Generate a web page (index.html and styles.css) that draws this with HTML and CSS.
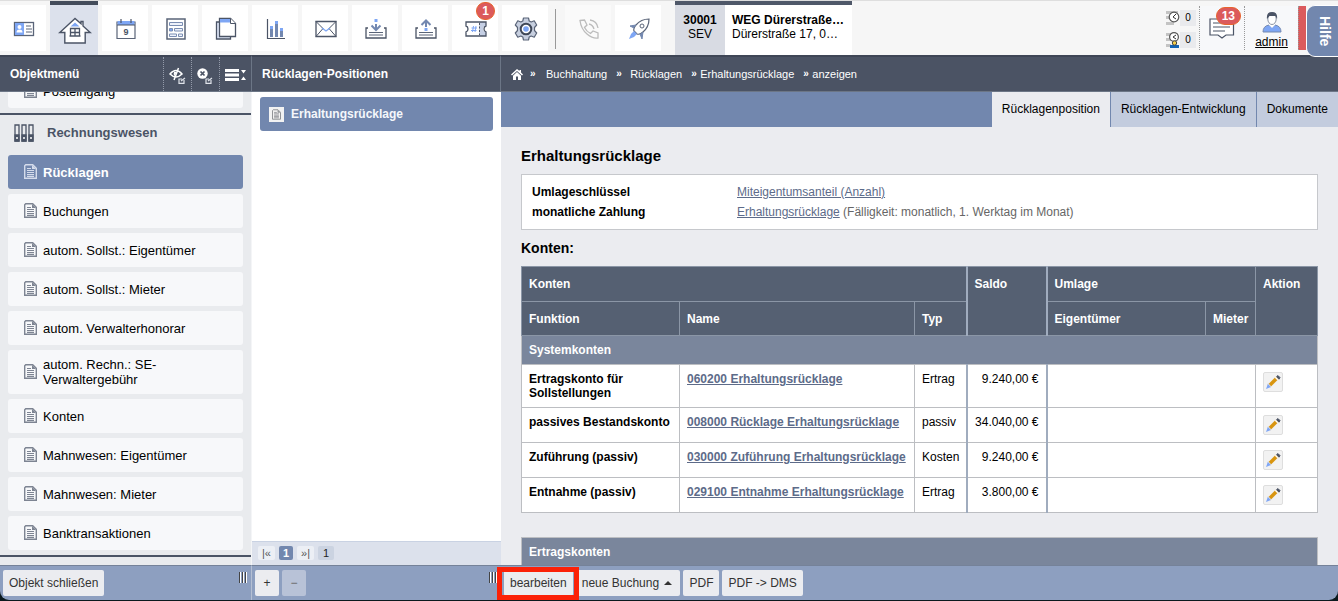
FILE: index.html
```html
<!DOCTYPE html>
<html lang="de">
<head>
<meta charset="utf-8">
<title>Rücklagen – Erhaltungsrücklage</title>
<link rel="stylesheet" href="styles.css">
</head>
<body>
<svg class="defs" aria-hidden="true">
  <symbol id="doc" viewBox="0 0 13 15">
    <path d="M1.700.700h7l3.600 3.600v10H.700V1.700z" fill="none" stroke="currentColor" stroke-width="1.400"/>
    <path d="M8 1v4h4z" fill="currentColor"/>
    <path d="M3 4.500h4M3 6.500h7M3 8.500h7M3 10.500h7M3 12.300h7" stroke="currentColor" stroke-width="1.200"/>
  </symbol>
  <symbol id="pencil" viewBox="0 0 16 16">
    <path d="M4 12 12 4" stroke="#d9950f" stroke-width="3.600"/>
    <path d="m10.300 3.300 2.500 2.500" stroke="#fff" stroke-width="1.300"/>
    <path d="m11.600 2.600 1.400-1 2 2-1 1.600z" fill="#4b5466" stroke="#4b5466"/>
    <path d="m3 9.500-2 5.500 5-2z" fill="#7fa6f5"/>
    <path d="m3 9.600 3.400 3.400" stroke="#dfe9ff"/>
  </symbol>
</svg>
<div class="app">
  <header class="topbar">
    <nav class="tools" aria-label="Hauptnavigation">
      <a class="tool" href="#" aria-label="Kontakte"><svg width="22" height="16" viewBox="0 0 22 16" fill="none"><rect x="1.500" y="1.500" width="19" height="13" fill="#fff" stroke="#5a6478" stroke-width="1.300"/><path d="M2 2h9v12H2z" fill="#7ea6f4"/><circle cx="6.500" cy="6" r="2" fill="#fff"/><path d="M3.500 11.500q0-3 3-3t3 3z" fill="#fff"/><path d="M13 5h5M13 8h6M13 11h6" stroke="#5a6478"/></svg></a>
      <a class="tool tool-active" href="#" aria-label="Objekte"><svg width="34" height="28" viewBox="0 0 34 28" fill="none"><path d="M17 1.500 1.800 15.500h5V26h20.400V15.500h5L25 9V4.500h-2v2.300z" fill="#fff" stroke="#4b5466" stroke-width="1.400"/><path d="m12.500 9.500 4.500-4 4.500 4z" fill="#7ea6f4"/><path d="M12.500 11.500h9v7.500h-9zM17 11.500v7.500M12.500 15.500h9M11.500 19h11" stroke="#4b5466" stroke-width="1.300"/></svg></a>
      <a class="tool" href="#" aria-label="Kalender"><svg width="20" height="22" viewBox="0 0 20 22"><path d="M1 4h18v16.500H1z" fill="#fff" stroke="#5a6478" stroke-width="1.200"/><path d="M1.600 3h16.800v4H1.600z" fill="#7ea6f4"/><path d="M1 7h18M5 1v4M15 1v4" stroke="#4b5466" stroke-width="1.200"/><text class="date-digit" x="10" y="16.500" text-anchor="middle">9</text></svg></a>
      <a class="tool" href="#" aria-label="Berichte"><svg width="20" height="22" viewBox="0 0 20 22" fill="none" stroke="#7b8eb3"><path d="M1 1h18v20H1z" fill="#fff" stroke="#5a6478" stroke-width="1.500"/><path d="M3.500 4.500h13v3h-13zM8.500 10.500h8v2.500h-8zM3.500 16h7v2.500h-7zM12.500 16h4v2.500h-4z" fill="#eef2fb"/><path d="M3.500 10.500h3V13h-3z" fill="#7ea6f4"/></svg></a>
      <a class="tool" href="#" aria-label="Dokumente"><svg width="22" height="24" viewBox="0 0 22 24"><path d="M1.500 5h14v17h-14z" fill="#dfe7f8" stroke="#4b5466" stroke-width="1.300"/><path d="M4.500 1.500h11l5 5v13h-16z" fill="#fff" stroke="#4b5466" stroke-width="1.300"/><path d="M5 2h10v3.500H5z" fill="#7ea6f4"/><path d="M15.500 1.500v5h5" fill="#fff" stroke="#4b5466"/></svg></a>
      <a class="tool" href="#" aria-label="Auswertungen"><svg width="20" height="22" viewBox="0 0 20 22"><path d="M1.500 1v19.500H19" fill="none" stroke="#4b5466" stroke-width="1.200"/><path d="M4 11h3v8H4zM9 6h3v13H9zM14 13h3v6h-3z" fill="#7388b0"/><path d="M4 8h3v3H4zM9 3h3v3H9zM14 10h3v3h-3z" fill="#7ea6f4"/></svg></a>
      <a class="tool" href="#" aria-label="E-Mail"><svg width="22" height="18" viewBox="0 0 22 18" fill="none"><path d="M1 1.500h20v15H1z" stroke="#4b5466" stroke-width="1.300"/><path d="m1 1.500 7 7L1 16.500M21 1.500l-7 7 7 8" stroke="#4b5466"/><path d="m7 8 4 3 4-3" stroke="#7ea6f4" stroke-width="1.300"/></svg></a>
      <a class="tool" href="#" aria-label="Eingang"><svg width="22" height="20" viewBox="0 0 22 20" fill="none"><path d="M3 9H1v10h20V9h-2" stroke="#4b5466" stroke-width="1.300"/><path d="M4 13.500h14M4 16h14" stroke="#5a6478"/><path d="M11 5v6M6.500 6.500 11 11l4.500-4.500" stroke="#7388b0" stroke-width="2"/><path d="M9.500 0h3v3h-3z" fill="#7ea6f4"/></svg></a>
      <a class="tool" href="#" aria-label="Ausgang"><svg width="22" height="20" viewBox="0 0 22 20" fill="none"><path d="M3 9H1v10h20V9h-2" stroke="#4b5466" stroke-width="1.300"/><path d="M4 13.500h14M4 16h14" stroke="#5a6478"/><path d="M11 2v6M6.500 6 11 1.500 15.500 6" stroke="#7388b0" stroke-width="2"/><path d="M9.500 9h3v3h-3z" fill="#7ea6f4"/></svg></a>
      <a class="tool" href="#" aria-label="Tickets"><svg width="22" height="16" viewBox="0 0 22 16" fill="none"><path d="M14 1h7v4q-3 0-3 3t3 3v4h-7z" fill="#c5cfe4"/><path d="M1 1h20v4q-2 .5-2 3t2 3v4H1v-4q2-.5 2-3T1 5z" stroke="#4b5466" stroke-width="1.300"/><path d="M14.500 2v12" stroke="#4b5466" stroke-dasharray="2 1.500"/><path d="m8.500 5-1 6m3.500-6-1 6M6.500 7h5.500m-6 2.500h5.500" stroke="#7ea6f4"/></svg><span class="badge">1</span></a>
      <a class="tool" href="#" aria-label="Einstellungen"><svg width="24" height="24" viewBox="0 0 24 24"><path d="M9.500 1h5l.7 3 2 1 3-1.200 2.500 4.200L20.500 10.500v3l2.200 2.500-2.500 4.200-3-1.200-2 1-.7 3h-5l-.7-3-2-1-3 1.200L1.300 16l2.200-2.500v-3L1.300 8l2.500-4.200 3 1.200 2-1z" fill="#c7cfdf" stroke="#5a6478" stroke-width="1.200" stroke-linejoin="round"/><circle cx="12" cy="12" r="5.300" fill="#fff" stroke="#3f4757" stroke-width="2"/><circle cx="12" cy="12" r="2.800" fill="#7ea6f4"/></svg></a>
      <span class="tool-rule"></span>
      <a class="tool tool-off" href="#" aria-label="Telefon"><svg width="20" height="20" viewBox="0 0 20 20" fill="none" stroke="#bcbcbc" stroke-width="1.300"><path d="M1 1.500 5.500 1 8 6 5.500 8.500q2 4 6 6L14 12l5 2v5q-5 1-11-4T1 1.500z"/><path d="M10 5q4 1 5 5M11 1q7 1 8 8"/></svg></a>
      <a class="tool" href="#" aria-label="Schnellstart"><svg width="22" height="22" viewBox="0 0 22 22" fill="none" stroke="#5a6478"><path d="M21 1q-8 0-13 6-3 4-2 6l3 3q3 1 6-2 6-5 6-13z" stroke-width="1.200"/><circle cx="14" cy="8" r="2"/><path d="m8 7-6 1 4 2M15 14l-1 7-2-5" fill="#7388b0" stroke="#7388b0"/><path d="m6 13-3 3-2 5 5-2 3-3z" fill="#7ea6f4" stroke="none"/></svg></a>
    </nav>
    <a class="object" href="#">
      <span class="object-no"><b>30001</b><span>SEV</span></span>
      <span class="object-name"><b>WEG Dürerstraße…</b><span>Dürerstraße 17, 0…</span></span>
    </a>
    <div class="status">
      <div class="counters">
        <span class="counter"><svg width="14" height="16" viewBox="0 0 14 16"><path d="M0 1h12v3H0zM0 6h10v3H0zM0 12h8v3H0z" fill="#c3c3c3"/><circle cx="8" cy="7" r="4.800" fill="#fff" stroke="#555" stroke-width="1.200"/><path d="M10 4 7 7l3 2" fill="none" stroke="#333"/></svg><span class="count">0</span></span>
        <span class="counter"><svg width="14" height="16" viewBox="0 0 14 16"><path d="M0 1h12v3H0zM0 6h10v3H0zM0 12h5v3H0z" fill="#c3c3c3"/><circle cx="8" cy="5" r="4.400" fill="#fff" stroke="#555" stroke-width="1.200"/><path d="M10 3 7 5l3 2" fill="none" stroke="#333"/><path d="M4 16v-3h9v3z" fill="#1464b4"/><circle cx="8.500" cy="11" r="2.200" fill="#f4cf4a" stroke="#444"/></svg><span class="count">0</span></span>
      </div>
      <a class="messages" href="#" aria-label="Nachrichten"><svg width="26" height="22" viewBox="0 0 26 22" fill="none" stroke="#4b5466" stroke-width="1.200"><path d="M1 2h23.500v16H17l-4 3-4-3H1z" fill="#fff"/><path d="M4 6h13M4 10h17M4 14h12"/></svg><span class="badge badge-wide">13</span></a>
      <a class="user" href="#"><svg width="20" height="22" viewBox="0 0 20 22"><path d="M1 21q0-6 6-7l3 2 3-2q6 1 6 7z" fill="#7ea6f4" stroke="#7388b0"/><path d="M7 12h6v2l-3 3-3-3z" fill="#fff"/><ellipse cx="10" cy="8" rx="4.200" ry="5.500" fill="#fff" stroke="#8a93a3"/><path d="M5 8q-1-7 5-7t5 7l-1.500-3h-6z" fill="#4b5466"/></svg><span>admin</span></a>
      <span class="alarm"></span>
    </div>
    <button class="help" type="button">Hilfe</button>
  </header>

  <div class="columns">
    <aside class="col col-menu">
      <div class="bar">
        <h2 class="bar-title">Objektmenü</h2>
        <button class="bar-btn" type="button" aria-label="Ausblenden"><svg width="18" height="18" viewBox="0 0 18 18" fill="none" stroke="#fff" stroke-width="1.500"><path d="M1 7q6-7 12 0-6 6-12 0zM9.500 1 5 13"/><path d="M5 5q-1 3 1 4l1.500-4z" fill="#fff" stroke="none"/><path d="M15 13v3.300h-5V12h3M12 14l4-3" stroke="#dfe3ea" stroke-width="1.200"/></svg></button>
        <button class="bar-btn" type="button" aria-label="Schließen"><svg width="18" height="18" viewBox="0 0 18 18" fill="none"><circle cx="5.500" cy="6.500" r="5.200" fill="#fff"/><path d="m3.500 4.500 4 4m0-4-4 4" stroke="#4b5364" stroke-width="1.700"/><path d="M14 13v3.300H9V12h3M11 14l4-3" stroke="#dfe3ea" stroke-width="1.200"/></svg></button>
        <button class="bar-btn bar-btn-last" type="button" aria-label="Ansicht"><svg width="21" height="12" viewBox="0 0 21 12" fill="#fff"><path d="M0 0h14v3H0zM0 4.500h14v3H0zM0 9h14v3H0zM16 1h5l-2.500 3.500zM16 11h5l-2.500-3.500z"/></svg></button>
      </div>
      <nav class="menu" aria-label="Objektmenü">
        <div class="menu-scroll">
          <a class="item" href="#"><svg class="doc"><use href="#doc"/></svg><span>Posteingang</span></a>
          <h3 class="group"><svg width="20" height="18" viewBox="0 0 20 18" fill="none" stroke="#4b5466" stroke-width="1.300"><path d="M1 1h4v16H1zM8 1h4v16H8zM15 1h4v16h-4z"/><path d="M1 11h4v6H1zM8 11h4v6H8zM15 11h4v6h-4z" fill="#4b5466"/><path d="M2 14h2M9 14h2M16 14h2" stroke="#fff"/></svg>Rechnungswesen</h3>
          <a class="item item-active" href="#"><svg class="doc"><use href="#doc"/></svg><span>Rücklagen</span></a>
          <a class="item" href="#"><svg class="doc"><use href="#doc"/></svg><span>Buchungen</span></a>
          <a class="item" href="#"><svg class="doc"><use href="#doc"/></svg><span>autom. Sollst.: Eigentümer</span></a>
          <a class="item" href="#"><svg class="doc"><use href="#doc"/></svg><span>autom. Sollst.: Mieter</span></a>
          <a class="item" href="#"><svg class="doc"><use href="#doc"/></svg><span>autom. Verwalterhonorar</span></a>
          <a class="item" href="#"><svg class="doc"><use href="#doc"/></svg><span>autom. Rechn.: SE-<br>Verwaltergebühr</span></a>
          <a class="item" href="#"><svg class="doc"><use href="#doc"/></svg><span>Konten</span></a>
          <a class="item" href="#"><svg class="doc"><use href="#doc"/></svg><span>Mahnwesen: Eigentümer</span></a>
          <a class="item" href="#"><svg class="doc"><use href="#doc"/></svg><span>Mahnwesen: Mieter</span></a>
          <a class="item" href="#"><svg class="doc"><use href="#doc"/></svg><span>Banktransaktionen</span></a>
          <div class="group"></div>
        </div>
      </nav>
      <footer class="foot">
        <button class="btn" type="button">Objekt schließen</button>
        <span class="grip"></span>
      </footer>
    </aside>

    <section class="col col-list">
      <div class="bar"><h2 class="bar-title">Rücklagen-Positionen</h2></div>
      <div class="list">
        <a class="position" href="#"><span class="position-icon"><svg class="doc-small"><use href="#doc"/></svg></span>Erhaltungsrücklage</a>
      </div>
      <div class="pager">
        <button class="page" type="button">|«</button>
        <button class="page page-active" type="button">1</button>
        <button class="page" type="button">»|</button>
        <span class="page page-total">1</span>
      </div>
      <footer class="foot">
        <button class="btn btn-square" type="button">+</button>
        <button class="btn btn-square" type="button" disabled>−</button>
        <span class="grip"></span>
      </footer>
    </section>

    <main class="col col-main">
      <nav class="bar crumbs" aria-label="Brotkrumen">
        <a class="crumb-home" href="#" aria-label="Start"><svg width="12" height="11" viewBox="0 0 12 11" fill="#fff"><path d="M6 0 0 5.500 1 6.500l5-4.500 5 4.500 1-1-2-2V1H8.500v1z"/><path d="M6 3 2 6.700V11h3V7.500h2V11h3V6.700z"/></svg></a>
        <span class="sep sep-first">»</span><a href="#">Buchhaltung</a>
        <span class="sep">»</span><a href="#">Rücklagen</a>
        <span class="sep sep-tight">»</span><a href="#">Erhaltungsrücklage</a>
        <span class="sep sep-tight">»</span><a href="#">anzeigen</a>
      </nav>
      <nav class="tabs" aria-label="Ansichten">
        <a class="tab tab-active" href="#">Rücklagenposition</a>
        <a class="tab" href="#">Rücklagen-Entwicklung</a>
        <a class="tab" href="#">Dokumente</a>
      </nav>
      <div class="page-body">
        <h1 class="title">Erhaltungsrücklage</h1>
        <dl class="facts">
          <dt>Umlageschlüssel</dt><dd><a href="#">Miteigentumsanteil (Anzahl)</a></dd>
          <dt>monatliche Zahlung</dt><dd><a href="#">Erhaltungsrücklage</a> (Fälligkeit: monatlich, 1. Werktag im Monat)</dd>
        </dl>
        <h2 class="subtitle">Konten:</h2>
        <table class="accounts">
          <colgroup><col class="c-func"><col class="c-name"><col class="c-type"><col class="c-saldo"><col><col class="c-tenant"><col class="c-action"></colgroup>
          <thead>
            <tr><th colspan="3">Konten</th><th class="edge" rowspan="2">Saldo</th><th class="edge" colspan="2">Umlage</th><th rowspan="2">Aktion</th></tr>
            <tr><th>Funktion</th><th>Name</th><th>Typ</th><th class="edge">Eigentümer</th><th>Mieter</th></tr>
          </thead>
          <tbody>
            <tr><th class="band" colspan="7">Systemkonten</th></tr>
            <tr><th>Ertragskonto für Sollstellungen</th><td><a href="#">060200 Erhaltungsrücklage</a></td><td>Ertrag</td><td class="edge amount">9.240,00 €</td><td class="edge" colspan="2"></td><td><button class="edit" type="button" aria-label="Bearbeiten"><svg width="16" height="16"><use href="#pencil"/></svg></button></td></tr>
            <tr><th>passives Bestandskonto</th><td><a href="#">008000 Rücklage Erhaltungsrücklage</a></td><td>passiv</td><td class="edge amount">34.040,00 €</td><td class="edge" colspan="2"></td><td><button class="edit" type="button" aria-label="Bearbeiten"><svg width="16" height="16"><use href="#pencil"/></svg></button></td></tr>
            <tr><th>Zuführung (passiv)</th><td><a href="#">030000 Zuführung Erhaltungsrücklage</a></td><td>Kosten</td><td class="edge amount">9.240,00 €</td><td class="edge" colspan="2"></td><td><button class="edit" type="button" aria-label="Bearbeiten"><svg width="16" height="16"><use href="#pencil"/></svg></button></td></tr>
            <tr><th>Entnahme (passiv)</th><td><a href="#">029100 Entnahme Erhaltungsrücklage</a></td><td>Ertrag</td><td class="edge amount">3.800,00 €</td><td class="edge" colspan="2"></td><td><button class="edit" type="button" aria-label="Bearbeiten"><svg width="16" height="16"><use href="#pencil"/></svg></button></td></tr>
          </tbody>
        </table>
        <table class="accounts">
          <tbody><tr><th class="band">Ertragskonten</th></tr></tbody>
        </table>
      </div>
      <footer class="foot">
        <span class="marked"><button class="btn" type="button">bearbeiten</button></span>
        <button class="btn" type="button">neue Buchung <span class="caret"></span></button>
        <button class="btn" type="button">PDF</button>
        <button class="btn" type="button">PDF -&gt; DMS</button>
      </footer>
    </main>
  </div>
</div>
</body>
</html>
```
FILE: styles.css
```css
* { box-sizing: border-box; }

body {
  margin: 0;
  height: 100vh;
  padding-bottom: 1px;
  overflow: hidden;
  background: #0b1a1e;
  color: #000;
  font: 12px/14px "Liberation Sans", Arial, sans-serif;
}

a { color: inherit; text-decoration: none; }
button { font: inherit; color: inherit; border: 0; padding: 0; margin: 0; background: none; }
h1, h2, h3, dl, dd { margin: 0; }
.defs { display: none; }

.app {
  display: flex;
  flex-direction: column;
  height: 100%;
  overflow: hidden;
  border-radius: 0 0 9px 9px;
}

/* Top bar */
.topbar {
  position: relative;
  display: flex;
  flex: none;
  height: 55px;
  border-top: 1px solid #dedede;
  background: #f6f6f6;
}
.tools { display: flex; gap: 4px; padding-top: 4px; }
.tool {
  position: relative;
  display: flex;
  align-items: center;
  justify-content: center;
  width: 46px;
  height: 46px;
  padding: 1px 0 0 1px;
  background: #fff;
}
.tool-active {
  width: 48px;
  height: 54px;
  margin-top: -4px;
  border-top: 4px solid #434c5b;
  background: #dce1ec;
}
.tool-off { background: #fafafa; }
.tool-rule { width: 1px; height: 40px; margin: 4px 5px 0 3px; background: #999; }
.date-digit { font: bold 9px "Liberation Sans", Arial, sans-serif; fill: #4b5466; }

.badge {
  position: absolute;
  top: -3px;
  right: 3px;
  min-width: 19px;
  padding: 1px 5px;
  border: 1px solid #e8632c;
  border-radius: 10px;
  background: #db5a5c;
  color: #fff;
  font-weight: bold;
  text-align: center;
}
.badge-wide { top: 1px; }

.object {
  display: flex;
  margin-left: 14px;
  border-top: 4px solid #4f5869;
  background: #fff;
  line-height: 14px;
}
.object-no, .object-name { display: flex; flex-direction: column; padding-top: 8px; }
.object-no { width: 50px; align-items: center; background: #d8dbe3; }
.object-name { width: 127px; padding-left: 7px; }

.status { display: flex; margin-left: auto; padding: 5px 32px 5px 0; }
.counters { display: flex; flex-direction: column; gap: 6px; padding: 4px 3px 0 0; font-size: 10px; }
.counter { display: flex; align-items: center; height: 16px; }
.count { width: 16px; padding: 1px 0; background: #e9eaed; text-align: center; }
.messages {
  position: relative;
  width: 46px;
  padding: 11px 0 0 9px;
  border-left: 1px dotted #999;
  border-right: 1px dotted #999;
  background: #f7f8fa;
}
.user {
  display: flex;
  flex-direction: column;
  align-items: center;
  gap: 2px;
  width: 53px;
  padding-top: 5px;
  background: #f7f8fa;
  text-decoration: underline;
}
.alarm { width: 8px; border-left: 1px dotted #999; background: #db5a5c; }
.help {
  position: absolute;
  z-index: 2;
  top: 4px;
  right: 0;
  width: 32px;
  height: 52px;
  padding-left: 5px;
  border: 1px solid #fff;
  border-right: 0;
  border-radius: 9px 0 0 9px;
  background: #7287ae;
  color: #fff;
  font-size: 14px;
  font-weight: bold;
  writing-mode: vertical-rl;
}

/* Columns */
.columns { display: flex; flex: 1; min-height: 0; }
.col { display: flex; flex-direction: column; min-width: 0; }
.col-menu { width: 252px; flex: none; }
.col-list { width: 249px; flex: none; }
.col-main { flex: 1; }

.bar {
  display: flex;
  align-items: center;
  flex: none;
  height: 37px;
  padding-left: 10px;
  border-top: 2px solid #3f4656;
  border-bottom: 1px solid #6c7686;
  border-right: 1px solid #6c7686;
  background: #4b5364;
  color: #fff;
}
.bar-title { flex: 1; font-size: 12px; }
.bar-btn {
  display: flex;
  align-items: center;
  align-self: stretch;
  justify-content: center;
  width: 28px;
  padding-top: 3px;
  border-left: 1px dotted #949baa;
}
.bar-btn-last { width: 32px; padding-top: 2px; }
.crumbs { border-right: 0; font-size: 11px; }
.crumb-home { display: flex; }
.sep { width: 23px; padding-left: 9px; font-weight: bold; font-size: 10px; }
.sep-first { padding-left: 7px; }
.sep-tight { width: 18px; }

.foot {
  display: flex;
  gap: 3px;
  flex: none;
  height: 35px;
  padding: 4px 3px;
  border-top: 1px solid #758299;
  background: #8d9fc0;
}
.col-menu .foot { border-right: 1px solid #b4bfd3; }
.btn {
  height: 26px;
  padding: 0 6px;
  border-radius: 2px;
  background: #ebecf0;
  color: #333;
  white-space: nowrap;
}
.btn-square { width: 24px; }
.btn:disabled { background: #b8c2d7; color: #666; }
.grip {
  width: 8px;
  height: 11px;
  margin: 2px 1px 0 auto;
  background: repeating-linear-gradient(90deg, #444 0 1px, #fff 1px 2px, #8d9fc0 2px 3px);
}
.caret {
  display: inline-block;
  margin: 0 2px 2px 2px;
  border: 4px solid transparent;
  border-top: 0;
  border-bottom-color: #333;
}
.marked { position: relative; display: flex; }
.marked::after {
  content: "";
  position: absolute;
  inset: -3px -6px -4px -7px;
  border: 5px solid #fb2108;
}

/* Object menu */
.menu {
  flex: 1;
  min-height: 0;
  overflow: hidden;
  border-right: 1px solid #f4f5f7;
  background: #e9ebee;
}
.menu-scroll { display: flex; flex-direction: column; gap: 5px; margin-top: -18px; }
.item {
  display: flex;
  align-items: center;
  gap: 6px;
  min-height: 34px;
  margin: 0 8px;
  padding: 7px 8px 7px 16px;
  border-radius: 3px;
  background: #f7f8fa;
  font-size: 13px;
  line-height: 15px;
}
.doc { flex: none; width: 13px; height: 15px; margin-bottom: 2px; color: #7d8492; }
.item-active { background: #7287ae; color: #fff; font-weight: bold; }
.item-active .doc { color: #d5dceb; }
.group {
  display: flex;
  align-items: center;
  flex: none;
  gap: 13px;
  height: 37px;
  padding-left: 14px;
  border-top: 2px solid #4b5466;
  color: #4b5466;
  font-size: 13px;
}

/* Position list */
.list { flex: 1; min-height: 0; padding: 5px 8px; background: #fff; }
.position {
  display: flex;
  align-items: center;
  gap: 7px;
  height: 34px;
  padding-left: 9px;
  border-radius: 3px;
  background: #7287ae;
  color: #f5f7fb;
  font-weight: bold;
}
.position-icon { display: flex; padding: 2px 3px; background: #f2f2f2; color: #8d8f93; }
.doc-small { width: 9px; height: 11px; }
.pager {
  display: flex;
  gap: 4px;
  flex: none;
  height: 24px;
  padding: 4px 6px 5px;
  border-top: 1px solid #c9d2e3;
  background: #dce1ec;
  font-size: 11px;
}
.page { min-width: 14px; padding: 0 4px; border-radius: 2px; background: #eceff5; color: #555; }
.page-active { background: #7287ae; color: #fff; font-weight: bold; }
.page-total { padding: 0 5px; background: #cbd3e1; color: #222; }

/* Detail page */
.tabs { display: flex; justify-content: flex-end; flex: none; gap: 1px; background: #7287ae; }
.tab { padding: 10px 10px 11px; background: #c3ccde; }
.tab-active { background: #ebecf0; }

.page-body { flex: 1; min-height: 0; overflow: hidden; padding: 20px 20px 0; background: #ebecf0; }
.title { font-size: 15px; line-height: 18px; }
.facts {
  display: grid;
  grid-template-columns: 205px 1fr;
  margin: 9px 0;
  padding: 7px 10px;
  border: 1px solid #c6c8cc;
  background: #fff;
  line-height: 20px;
}
.facts dt { font-weight: bold; }
.facts dd { color: #666; }
.facts a, .accounts a { color: #5d6b89; text-decoration: underline; }
.subtitle { font-size: 14px; line-height: 18px; }

.accounts {
  width: 100%;
  margin: 9px 0 24px;
  border-collapse: collapse;
  table-layout: fixed;
  background: #fff;
}
.accounts th, .accounts td {
  padding: 7px;
  border: 1px solid #bcbec2;
  text-align: left;
  vertical-align: top;
}
.accounts thead th { padding: 10px 7px; border-color: #8b96a6; background: #556072; color: #fff; }
.accounts thead tr + tr th { padding-bottom: 9px; }
.accounts .edge { border-left: 2px solid #a0acbe; }
.accounts .band { background: #7a869c; color: #fff; }
.accounts a { font-weight: bold; }
.accounts .amount { text-align: right; }
.c-func { width: 158px; }
.c-name { width: 235px; }
.c-type { width: 52px; }
.c-saldo { width: 80px; }
.c-tenant { width: 50px; }
.c-action { width: 62px; }
.edit {
  display: flex;
  align-items: center;
  justify-content: center;
  width: 20px;
  height: 20px;
  border: 1px solid #dedede;
  border-radius: 2px;
  background: #f2f2f2;
}
```
